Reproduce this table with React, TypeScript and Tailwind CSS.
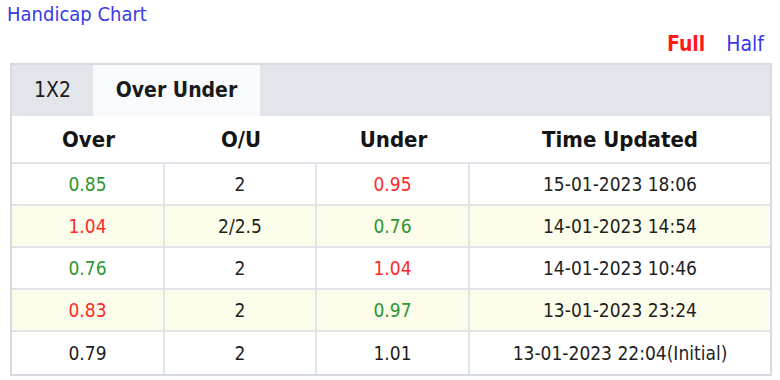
import React from 'react';

type Row = {
  over: string;
  overColor: string;
  line: string;
  under: string;
  underColor: string;
  time: string;
};

const GREEN = 'text-[#2f962f]';
const RED = 'text-[#ff2a2a]';
const BLACK = 'text-[#1e1e1e]';

const rows: Row[] = [
  { over: '0.85', overColor: GREEN, line: '2', under: '0.95', underColor: RED, time: '15-01-2023 18:06' },
  { over: '1.04', overColor: RED, line: '2/2.5', under: '0.76', underColor: GREEN, time: '14-01-2023 14:54' },
  { over: '0.76', overColor: GREEN, line: '2', under: '1.04', underColor: RED, time: '14-01-2023 10:46' },
  { over: '0.83', overColor: RED, line: '2', under: '0.97', underColor: GREEN, time: '13-01-2023 23:24' },
  { over: '0.79', overColor: BLACK, line: '2', under: '1.01', underColor: BLACK, time: '13-01-2023 22:04(Initial)' },
];

const font = 'font-["DejaVu_Sans_Condensed","DejaVu_Sans",sans-serif]';

export default function App() {
  return (
    <div className={`w-[780px] h-[380px] bg-white ${font} overflow-hidden`}>
      {/* 제목 */}
      <div className="h-[28px] pl-[7px] text-[20px] leading-[28px] text-[#3a3ae6]">Handicap Chart</div>

      {/* Full / Half */}
      <div className="h-[35px] pb-[5px] pr-[16px] flex items-end justify-end gap-[21px] text-[21px] leading-[28px]">
        <span className="font-bold text-[#ff1a1a]">Full</span>
        <span className="text-[#3a3ae6]">Half</span>
      </div>

      <div className="ml-[10px] w-[762px] border-2 border-[#d5dbe1]">
        {/* 탭 */}
        <div className="h-[51px] flex bg-[#e2e6ea] text-[21px] text-[#1a1a1a]">
          <div className="w-[81px] flex items-center justify-center">1X2</div>
          <div className="w-[167px] flex items-center justify-center bg-[#f8fafc] font-bold">Over Under</div>
        </div>

        {/* 헤더 */}
        <div className="h-[48px] grid grid-cols-[153px_152px_153px_1fr] items-center text-center font-bold text-[22px] text-[#141414] border-b-2 border-[#e1e4e8]">
          <div>Over</div>
          <div>O/U</div>
          <div>Under</div>
          <div>Time Updated</div>
        </div>

        {rows.map((r, i) => (
          <div
            key={i}
            className={`h-[42px] grid grid-cols-[153px_152px_153px_1fr] text-center text-[19px] ${
              i % 2 === 1 ? 'bg-[#fcfcea]' : 'bg-white'
            } ${i < rows.length - 1 ? 'border-b-2 border-[#e1e4e8]' : ''}`}
          >
            <div className={`flex items-center justify-center border-r-2 border-[#e1e4e8] ${r.overColor}`}>{r.over}</div>
            <div className={`flex items-center justify-center border-r-2 border-[#e1e4e8] ${BLACK}`}>{r.line}</div>
            <div className={`flex items-center justify-center border-r-2 border-[#e1e4e8] ${r.underColor}`}>{r.under}</div>
            <div className={`flex items-center justify-center ${BLACK}`}>{r.time}</div>
          </div>
        ))}
      </div>
    </div>
  );
}
